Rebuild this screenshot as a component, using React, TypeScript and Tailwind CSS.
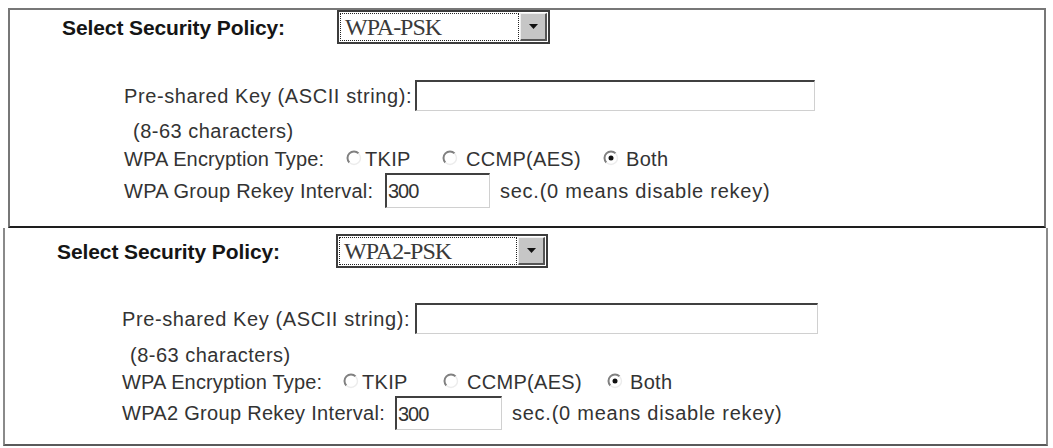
import React from "react";

type RadioProps = { checked?: boolean };

// Classic sunken radio button: dark arc on the upper-left, light arc on the lower-right
function Radio({ checked }: RadioProps) {
  return (
    <svg width="16" height="16" viewBox="0 0 16 16" className="shrink-0 -mt-[3px]">
      <path d="M3.4 12.6 A6.5 6.5 0 0 1 12.6 3.4" fill="none" stroke="#808080" strokeWidth="2" />
      <path d="M12.6 3.4 A6.5 6.5 0 0 1 3.4 12.6" fill="none" stroke="#ececec" strokeWidth="1.4" />
      {checked && <circle cx="8" cy="8" r="2.5" fill="#111" />}
    </svg>
  );
}

function Select({ value, width }: { value: string; width: string }) {
  return (
    <div className={`${width} h-full flex border-2 border-[#3c3c3c] bg-white`}>
      <div className="flex-1 m-[1px] border border-dotted border-[#222] flex items-center pl-[4px] font-['Liberation_Serif'] text-[24px] tracking-[-1px] text-[#3a3a3a] leading-none">
        {value}
      </div>
      <div className="w-[27px] my-[1px] mr-[1px] bg-[#c6c6c6] border-t border-l border-t-[#eeeeee] border-l-[#eeeeee] border-b-2 border-r-2 border-b-[#555] border-r-[#555] flex items-center justify-center">
        <svg width="9" height="5" viewBox="0 0 9 5">
          <path d="M0 0 H9 L4.5 5 Z" fill="#111" />
        </svg>
      </div>
    </div>
  );
}

function TextBox({ className, value }: { className: string; value?: string }) {
  return (
    <div
      className={`${className} shrink-0 bg-white border-t-2 border-l-2 border-t-[#404040] border-l-[#404040] border-b border-r border-b-[#d0d0d0] border-r-[#d0d0d0] flex items-center pl-[1px] text-[20px] tracking-[-1px] text-[#333] leading-none`}
    >
      {value}
    </div>
  );
}

type PanelProps = {
  policy: string;
  groupLabel: string;
  v: "a" | "b";
};

function Panel({ policy, groupLabel, v }: PanelProps) {
  const a = v === "a";
  return (
    <div
      className={
        a
          ? "w-[1038px] h-[220px] border-2 border-[#777] border-b-[#1e1e1e] flex flex-col"
          : "w-[1045px] h-[218px] border-2 border-t-0 border-[#8a8a8a] border-b-[#5a5a5a] flex flex-col"
      }
    >
      {/* policy selector */}
      <div className={a ? "h-[34px] flex items-center pl-[52px]" : "mt-[6px] h-[34px] flex items-center pl-[52px]"}>
        <div
          className={`${a ? "w-[275px]" : "w-[279px]"} shrink-0 font-bold text-[21px] tracking-[-0.1px] text-[#151515] leading-none`}
        >
          Select Security Policy:
        </div>
        <Select value={policy} width={a ? "w-[213px]" : "w-[212px]"} />
      </div>

      {/* pre-shared key */}
      <div className={`${a ? "mt-[36px] pl-[114px]" : "mt-[35px] pl-[117px]"} h-[31px] flex items-center`}>
        <div className={`${a ? "w-[291px]" : "w-[293px]"} shrink-0 tracking-[0.6px]`}>Pre-shared Key (ASCII string):</div>
        <TextBox className={a ? "w-[400px] h-[31px]" : "w-[403px] h-[31px]"} />
      </div>

      <div className={`${a ? "mt-[8px] pl-[123px]" : "mt-[9px] pl-[125px]"} h-[24px] flex items-center tracking-[0.5px]`}>
        (8-63 characters)
      </div>

      {/* encryption type */}
      <div className={`${a ? "mt-[4px] pl-[114px]" : "mt-[3px] pl-[117px]"} h-[24px] flex items-center`}>
        <div className={`${a ? "w-[222px]" : "w-[221px]"} shrink-0 tracking-[0.15px]`}>WPA Encryption Type:</div>
        <div className={`${a ? "w-[96px]" : "w-[100px]"} shrink-0 flex items-center gap-[3px] tracking-[0.3px]`}>
          <Radio />
          <span>TKIP</span>
        </div>
        <div className={`${a ? "w-[161px]" : "w-[164px]"} shrink-0 flex items-center gap-[8px] tracking-[0.3px]`}>
          <Radio />
          <span>CCMP(AES)</span>
        </div>
        <div className="flex items-center gap-[7px] tracking-[0.3px]">
          <Radio checked />
          <span>Both</span>
        </div>
      </div>

      {/* rekey interval */}
      <div className={`${a ? "mt-[2px] pl-[114px] h-[35px]" : "mt-[2px] pl-[117px] h-[34px]"} flex items-center`}>
        <div className={`${a ? "w-[261px] tracking-[0.25px]" : "w-[273px] tracking-[0.3px]"} shrink-0`}>{groupLabel}</div>
        <TextBox className={a ? "w-[105px] h-[35px]" : "w-[107px] h-[34px]"} value="300" />
        <div className="ml-[10px] tracking-[0.75px]">sec.(0 means disable rekey)</div>
      </div>
    </div>
  );
}

export default function App() {
  return (
    <div className="w-[1053px] h-[448px] bg-white overflow-hidden font-['Liberation_Sans',Arial,sans-serif] text-[20px] text-[#333] leading-none">
      <div className="pt-[8px] pl-[8px]">
        <Panel v="a" policy="WPA-PSK" groupLabel="WPA Group Rekey Interval:" />
      </div>
      <div className="pl-[3px]">
        <Panel v="b" policy="WPA2-PSK" groupLabel="WPA2 Group Rekey Interval:" />
      </div>
    </div>
  );
}
